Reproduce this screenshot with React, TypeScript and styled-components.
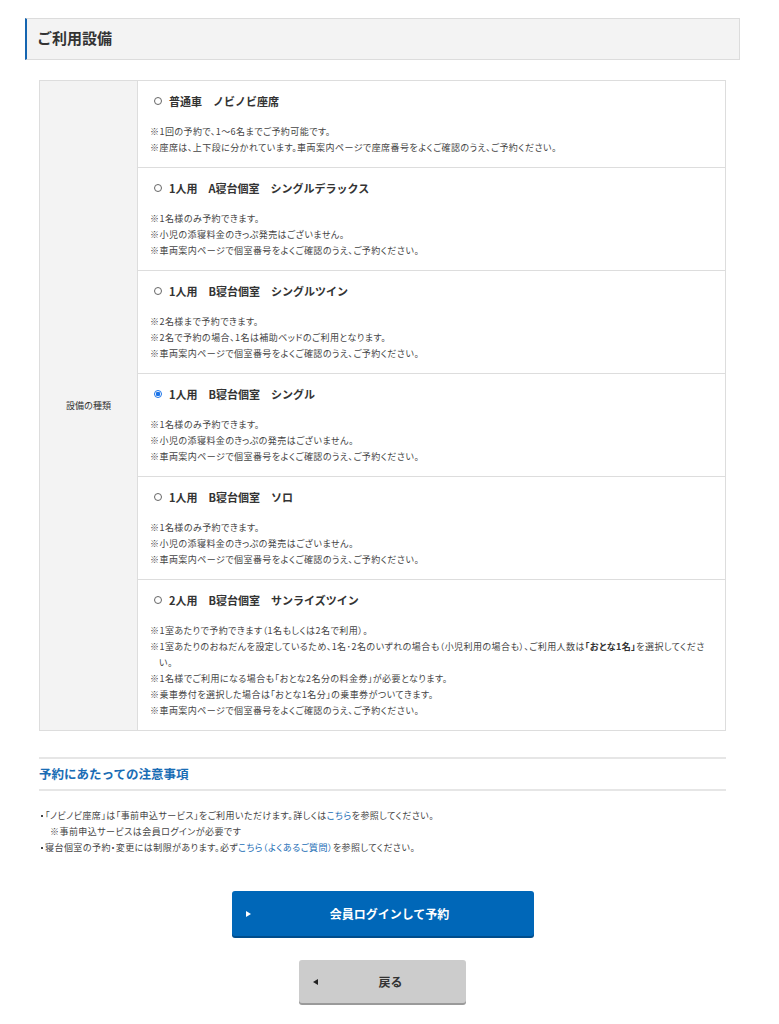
import { createGlobalStyle, styled } from 'styled-components';

interface ISeatOption {
  title: string;
  notes: React.ReactNode[];
  checked?: boolean;
}

const ROOM_CHECK_NOTE = '※車両案内ページで個室番号をよくご確認のうえ、ご予約ください。';
const NO_CHILD_NOTE = '※小児の添寝料金のきっぷの発売はございません。';

const SEAT_OPTIONS: ISeatOption[] = [
  {
    title: '普通車　ノビノビ座席',
    notes: [
      '※1回の予約で、1～6名までご予約可能です。',
      '※座席は、上下段に分かれています。車両案内ページで座席番号をよくご確認のうえ、ご予約ください。',
    ],
  },
  {
    title: '1人用　A寝台個室　シングルデラックス',
    notes: ['※1名様のみ予約できます。', '※小児の添寝料金のきっぷ発売はございません。', ROOM_CHECK_NOTE],
  },
  {
    title: '1人用　B寝台個室　シングルツイン',
    notes: [
      '※2名様まで予約できます。',
      '※2名で予約の場合、1名は補助ベッドのご利用となります。',
      ROOM_CHECK_NOTE,
    ],
  },
  {
    title: '1人用　B寝台個室　シングル',
    notes: ['※1名様のみ予約できます。', NO_CHILD_NOTE, ROOM_CHECK_NOTE],
    checked: true,
  },
  {
    title: '1人用　B寝台個室　ソロ',
    notes: ['※1名様のみ予約できます。', NO_CHILD_NOTE, ROOM_CHECK_NOTE],
  },
  {
    title: '2人用　B寝台個室　サンライズツイン',
    notes: [
      '※1室あたりで予約できます（1名もしくは2名で利用）。',
      <>
        ※1室あたりのおねだんを設定しているため、1名･2名のいずれの場合も（小児利用の場合も）、ご利用人数は
        <b>「おとな1名」</b>を選択してください。
      </>,
      '※1名様でご利用になる場合も「おとな2名分の料金券」が必要となります。',
      '※乗車券付を選択した場合は「おとな1名分」の乗車券がついてきます。',
      ROOM_CHECK_NOTE,
    ],
  },
];

const App = () => {
  const seatRows = SEAT_OPTIONS.map((option, index) => (
    <OptionRow key={index} isLast={index === SEAT_OPTIONS.length - 1}>
      <OptionTitle>
        <Radio type="radio" name="seat" defaultChecked={option.checked} />
        {option.title}
      </OptionTitle>
      <NoteList>
        {option.notes.map((note, noteIdx) => (
          <Note key={noteIdx}>{note}</Note>
        ))}
      </NoteList>
    </OptionRow>
  ));

  return (
    <>
      <GlobalStyle />
      <PageLayout>
        <SectionHeader>ご利用設備</SectionHeader>
        <Content>
          <SeatTable>
            <LabelCell>設備の種類</LabelCell>
            <OptionCell>{seatRows}</OptionCell>
          </SeatTable>

          <CautionHeading>予約にあたっての注意事項</CautionHeading>
          <CautionList>
            <li>
              「ノビノビ座席」は「事前申込サービス」をご利用いただけます。詳しくは
              <Link href="#">こちら</Link>を参照してください。
              <SubNote>※事前申込サービスは会員ログインが必要です</SubNote>
            </li>
            <li>
              寝台個室の予約・変更には制限があります。必ず
              <Link href="#">こちら（よくあるご質問）</Link>を参照してください。
            </li>
          </CautionList>

          <ButtonArea>
            <PrimaryButton type="button">
              <Arrow direction="right" />
              会員ログインして予約
            </PrimaryButton>
            <BackButton type="button">
              <Arrow direction="left" />
              戻る
            </BackButton>
          </ButtonArea>
        </Content>
      </PageLayout>
    </>
  );
};

const GlobalStyle = createGlobalStyle`
  * {
    box-sizing: border-box;
  }
  body {
    margin: 0;
    background: #fff;
    color: #333;
    font-family: "Noto Sans CJK JP", "Noto Sans", sans-serif;
  }
`;

const PageLayout = styled.div`
  width: 779px;
  padding: 18px 39px 20px 25px;
`;

const SectionHeader = styled.h2`
  margin: 0;
  height: 42px;
  padding: 0 10px 4px;
  display: flex;
  align-items: center;
  font-size: 15px;
  font-weight: 700;
  color: #333;
  background: #f3f3f3;
  border: 1px solid #dcdcdc;
  border-left: 2px solid #1565b0;
`;

const Content = styled.div`
  margin: 20px 14px 0;
`;

const SeatTable = styled.div`
  display: grid;
  grid-template-columns: 98px 1fr;
  border: 1px solid #ddd;
`;

const LabelCell = styled.div`
  display: flex;
  align-items: center;
  justify-content: center;
  background: #f3f3f3;
  border-right: 1px solid #ddd;
  font-size: 9px;
  color: #333;
`;

const OptionCell = styled.div`
  display: flex;
  flex-direction: column;
`;

const OptionRow = styled.div<{ isLast: boolean }>`
  padding: 12px 18px 11px 12px;
  border-bottom: ${({ isLast }) => (isLast ? 'none' : '1px solid #ddd')};
`;

const OptionTitle = styled.label`
  display: flex;
  align-items: center;
  gap: 7px;
  height: 16px;
  padding-left: 4px;
  font-size: 11px;
  font-weight: 700;
  color: #333;
`;

const Radio = styled.input`
  appearance: none;
  margin: 0;
  width: 8px;
  height: 8px;
  border: 1px solid #666;
  border-radius: 50%;
  background: #fff;

  &:checked {
    border-color: #1a73e8;
    background: radial-gradient(circle, #1a73e8 0 2px, #fff 2.5px);
  }
`;

const NoteList = styled.div`
  margin-top: 15px;
`;

const Note = styled.p`
  margin: 0;
  padding-left: 1em;
  text-indent: -1em;
  font-size: 9px;
  line-height: 16px;
  letter-spacing: 0.45px;
  color: #444;
  font-feature-settings: "palt";

  b {
    color: #333;
  }
`;

const CautionHeading = styled.h3`
  margin: 26px 0 0;
  padding: 7px 0;
  font-size: 12.5px;
  line-height: 16px;
  font-weight: 700;
  color: #1a6db5;
  border-top: 2px solid #e6e6e6;
  border-bottom: 2px solid #e6e6e6;
`;

const CautionList = styled.ul`
  margin: 17px 0 0;
  padding: 0 0 0 6px;
  list-style: none;
  font-size: 9px;
  line-height: 16px;
  letter-spacing: 0.45px;
  color: #444;
  font-feature-settings: "palt";

  li {
    position: relative;
  }

  li::before {
    content: '';
    position: absolute;
    left: -4px;
    top: 7px;
    width: 2px;
    height: 2px;
    background: #444;
  }
`;

const SubNote = styled.span`
  display: block;
  padding-left: 5px;
`;

const Link = styled.a`
  color: #1a6db5;
  text-decoration: none;
`;

const ButtonArea = styled.div`
  display: flex;
  flex-direction: column;
  align-items: center;
  gap: 24px;
  margin-top: 35px;
`;

const BaseButton = styled.button`
  position: relative;
  display: flex;
  align-items: center;
  justify-content: center;
  border: none;
  border-radius: 3px;
  font-family: inherit;
  font-size: 12px;
  font-weight: 700;
  cursor: pointer;
`;

const PrimaryButton = styled(BaseButton)`
  width: 302px;
  height: 45px;
  padding-left: 20px;
  color: #fff;
  background: #0067b8;
  box-shadow: 0 2px 0 #004d8c;
`;

const BackButton = styled(BaseButton)`
  width: 167px;
  height: 43px;
  padding-left: 22px;
  color: #333;
  background: #cccccc;
  box-shadow: 0 2px 0 #9a9a9a;
`;

const Arrow = styled.span<{ direction: 'left' | 'right' }>`
  position: absolute;
  top: 50%;
  left: 14px;
  transform: translateY(-50%);
  width: 0;
  height: 0;
  border-top: 3.5px solid transparent;
  border-bottom: 3.5px solid transparent;
  ${({ direction }) =>
    direction === 'right'
      ? 'border-left: 5px solid #fff;'
      : 'border-right: 5px solid #222;'}
`;

export default App;
